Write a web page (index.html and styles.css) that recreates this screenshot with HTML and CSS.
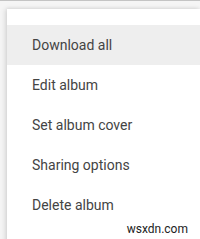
FILE: index.html
```html
<!DOCTYPE html>
<html lang="en">
<head>
    <meta charset="UTF-8" />
    <title>Album menu</title>
    <link rel="stylesheet" href="styles.css">
</head>
<body>
    <div class="backdrop">
        <ul class="album-menu">
            <li class="menu-item active">Download all</li>
            <li class="menu-item">Edit album</li>
            <li class="menu-item">Set album cover</li>
            <li class="menu-item">Sharing options</li>
            <li class="menu-item">Delete album</li>
        </ul>
        <span class="watermark">wsxdn.com</span>
    </div>
</body>
</html>
```

FILE: styles.css
```css
body {
    margin: 0;
    font-family: Roboto, "Noto Sans", Arial, sans-serif;
    background-color: #fff;
}

.backdrop {
    position: relative;
    height: 239px;
    overflow: hidden;
    border-top: 1px solid #c4c4c4;
    background-color: #f5f5f5;
    padding: 8px 0 0 7px;
    box-sizing: border-box;
}

.album-menu {
    list-style: none;
    margin: 0;
    padding: 16px 0 0 0;
    background-color: #fff;
    height: 100%;
    box-shadow: -2px 0 5px rgba(0, 0, 0, .12), 0 -1px 3px rgba(0, 0, 0, .06);
}

.menu-item {
    height: 40px;
    line-height: 40px;
    padding-left: 25px;
    font-size: 14px;
    color: #444;
}

.menu-item.active {
    background-color: #eeeeee;
}

.watermark {
    position: absolute;
    right: 12px;
    bottom: 3px;
    font-size: 12px;
    color: #222;
}
```
